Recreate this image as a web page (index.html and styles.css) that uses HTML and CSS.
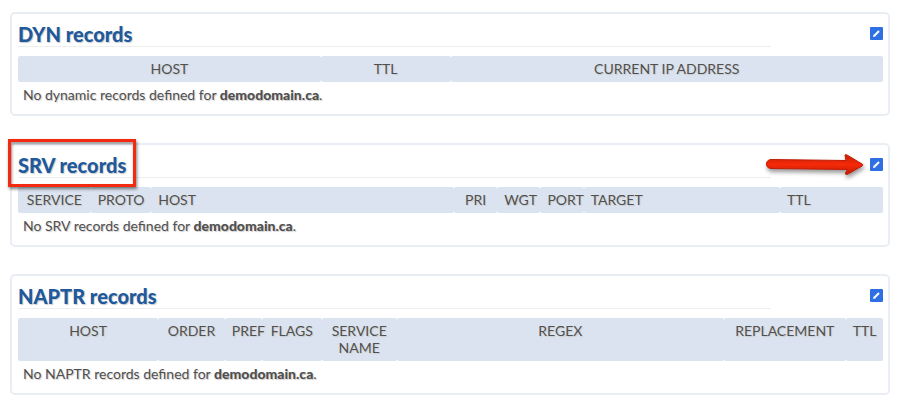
FILE: index.html
```
<!DOCTYPE html>
<html lang="en">
  <head>
    <meta charset="utf-8">
    <title>DNS records - demodomain.ca</title>
    <link rel="stylesheet" href="styles.css">
  </head>

  <body>
    <!-- DYN -->
    <section class="panel">
      <div class="panel-header">
        <h2>DYN records</h2>
        <button class="edit" type="button" aria-label="Edit DYN records">
          <svg viewBox="0 0 13 13"><path d="M3 10l.6-2.4 1.8 1.8z" /><path d="M4.3 8.7l4.7-4.7" /></svg>
        </button>
      </div>
      <table class="records dyn">
        <colgroup><col><col><col></colgroup>
        <thead>
          <tr>
            <th>HOST</th>
            <th>TTL</th>
            <th>CURRENT IP ADDRESS</th>
          </tr>
        </thead>
        <tbody>
          <tr>
            <td colspan="3">No dynamic records defined for <b>demodomain.ca</b>.</td>
          </tr>
        </tbody>
      </table>
    </section>

    <!-- SRV -->
    <section class="panel">
      <div class="panel-header">
        <h2>SRV records</h2>
        <button class="edit" type="button" aria-label="Edit SRV records">
          <svg viewBox="0 0 13 13"><path d="M3 10l.6-2.4 1.8 1.8z" /><path d="M4.3 8.7l4.7-4.7" /></svg>
        </button>
      </div>
      <table class="records srv">
        <colgroup><col><col><col><col><col><col><col><col></colgroup>
        <thead>
          <tr>
            <th>SERVICE</th>
            <th>PROTO</th>
            <th class="left">HOST</th>
            <th>PRI</th>
            <th>WGT</th>
            <th>PORT</th>
            <th class="left">TARGET</th>
            <th class="left">TTL</th>
          </tr>
        </thead>
        <tbody>
          <tr>
            <td colspan="8">No SRV records defined for <b>demodomain.ca</b>.</td>
          </tr>
        </tbody>
      </table>
      <!-- callouts -->
      <div class="marker"></div>
      <svg class="arrow" viewBox="0 0 104 30">
        <defs>
          <linearGradient id="arrow-fill" x1="0" y1="0" x2="0" y2="1">
            <stop offset="0" stop-color="#c91d05" />
            <stop offset="0.5" stop-color="#f52a08" />
            <stop offset="1" stop-color="#c41c04" />
          </linearGradient>
        </defs>
        <path d="M8 7.500L83 8.500L82 3.500Q82 2 84 3L99.500 12.300Q100.500 13 99.500 13.700L84.500 22.300Q82 23 82.500 21L84.500 17.500L8 16.500Q3.500 16 3.500 12Q3.500 8 8 7.500Z" />
      </svg>
    </section>

    <!-- NAPTR -->
    <section class="panel">
      <div class="panel-header">
        <h2>NAPTR records</h2>
        <button class="edit" type="button" aria-label="Edit NAPTR records">
          <svg viewBox="0 0 13 13"><path d="M3 10l.6-2.4 1.8 1.8z" /><path d="M4.3 8.7l4.7-4.7" /></svg>
        </button>
      </div>
      <table class="records naptr">
        <colgroup><col><col><col><col><col><col><col><col></colgroup>
        <thead>
          <tr>
            <th>HOST</th>
            <th>ORDER</th>
            <th>PREF</th>
            <th>FLAGS</th>
            <th>SERVICE NAME</th>
            <th>REGEX</th>
            <th>REPLACEMENT</th>
            <th>TTL</th>
          </tr>
        </thead>
        <tbody>
          <tr>
            <td colspan="8">No NAPTR records defined for <b>demodomain.ca</b>.</td>
          </tr>
        </tbody>
      </table>
    </section>
  </body>
</html>
```
FILE: styles.css
```
body {
  margin: 0;
  padding: 12px 14px 20px 10px;
  background-color: #ffffff;
  color: #505050;
  font-family: Lato, sans-serif;
  font-size: 14px;
  line-height: 17px;
  text-shadow: 1px 1px 1px #cccccc;
}

.panel {
  position: relative;
  margin-bottom: 27px;
  padding: 6px 5px 6px 6px;
  border: 2px solid #e9eef5;
  border-radius: 5px;
}

.panel:last-child {
  margin-bottom: 0;
}

.panel-header {
  display: flex;
  align-items: center;
  justify-content: space-between;
  margin-bottom: 9px;
}

h2 {
  width: 87%;
  margin: 0;
  padding-top: 2px;
  border-bottom: 1px solid #eeeeee;
  color: #20599c;
  font-family: "Lato Black", Lato, sans-serif;
  font-size: 20px;
  font-weight: 900;
  line-height: 24px;
}

.edit {
  width: 13px;
  height: 13px;
  padding: 0;
  border: none;
  border-radius: 1px;
  background-color: #2f6fe4;
  cursor: pointer;
}

.edit svg {
  display: block;
  fill: #ffffff;
  stroke: #ffffff;
  stroke-width: 2;
}

.edit path:first-child {
  stroke: none;
}

/* tables */

.records {
  width: 100%;
  table-layout: fixed;
  border-collapse: separate;
  border-spacing: 0;
}

th {
  padding: 4px 7px 5px;
  border-radius: 2px;
  background-color: #dae3ef;
  font-weight: 400;
  text-align: center;
  vertical-align: top;
}

th.left {
  text-align: left;
}

td {
  padding: 4px 5px 5px;
}

b {
  font-family: "Lato Black", Lato, sans-serif;
  font-weight: 900;
}

.dyn col:nth-child(1) { width: 35%; }
.dyn col:nth-child(2) { width: 15%; }
.dyn col:nth-child(3) { width: 50%; }

.srv col:nth-child(1) { width: 8.4%; }
.srv col:nth-child(2) { width: 7%; }
.srv col:nth-child(3) { width: 35%; }
.srv col:nth-child(4),
.srv col:nth-child(5),
.srv col:nth-child(6) { width: 5%; }
.srv col:nth-child(7) { width: 22.7%; }
.srv col:nth-child(8) { width: 11.9%; }

.naptr col:nth-child(1) { width: 16.2%; }
.naptr col:nth-child(2) { width: 7.7%; }
.naptr col:nth-child(3) { width: 4.3%; }
.naptr col:nth-child(4) { width: 6.9%; }
.naptr col:nth-child(5) { width: 8.7%; }
.naptr col:nth-child(6) { width: 37.8%; }
.naptr col:nth-child(7) { width: 14.1%; }
.naptr col:nth-child(8) { width: 4.3%; }

/* callouts */

.marker {
  position: absolute;
  top: -6px;
  left: -4px;
  width: 122px;
  height: 42px;
  border: 3px solid #f42a10;
  box-shadow: 1px 2px 3px rgba(0, 0, 0, 0.5), inset 1px 2px 3px rgba(0, 0, 0, 0.4);
}

.arrow {
  position: absolute;
  top: 7px;
  right: 21px;
  width: 104px;
  height: 30px;
  fill: url(#arrow-fill);
  stroke: #c01c06;
  stroke-width: 1;
  filter: drop-shadow(1px 3px 2px rgba(0, 0, 0, 0.4));
}
```
